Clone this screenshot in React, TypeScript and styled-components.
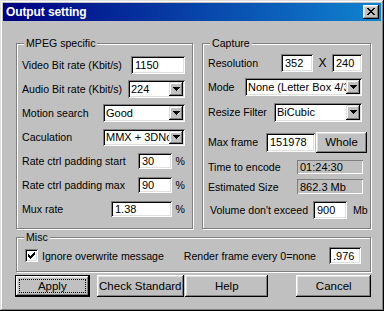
import styled, { createGlobalStyle } from 'styled-components';

const GlobalStyle = createGlobalStyle`
  html, body {
    margin: 0;
    padding: 0;
    background: #c0c0c0;
  }
  body {
    font-family: "Liberation Sans", Arial, sans-serif;
    font-size: 10.6px;
    color: #000;
  }
`;

const Window = styled.div`
  width: 384px;
  height: 311px;
  box-sizing: border-box;
  padding: 3px;
  background: #c0c0c0;
  box-shadow: inset -1px -1px #000, inset 1px 1px #dfdfdf,
    inset -2px -2px #808080, inset 2px 2px #fff;
  display: flex;
  flex-direction: column;
`;

const TitleBar = styled.div`
  height: 18px;
  display: flex;
  align-items: center;
  justify-content: space-between;
  padding: 0 2px 0 3px;
  background: linear-gradient(to right, #000080, #1084d0);
`;

const TitleText = styled.span`
  color: #fff;
  font-weight: bold;
  font-size: 12px;
  letter-spacing: -0.1px;
`;

const CloseButton = styled.div`
  width: 16px;
  height: 14px;
  background: #c0c0c0;
  display: flex;
  align-items: center;
  justify-content: center;
  box-shadow: inset -1px -1px #000, inset 1px 1px #fff,
    inset -2px -2px #808080, inset 2px 2px #dfdfdf;
  svg {
    margin-top: -1px;
  }
`;

const Body = styled.div`
  flex: 1;
  display: flex;
  flex-direction: column;
  padding: 22px 10px 0 13px;
`;

const Columns = styled.div`
  display: grid;
  grid-template-columns: 177px 169px;
  column-gap: 9px;
  height: 186px;
  margin-bottom: 8px;
`;

const Group = styled.div<{ $pad: string; $h?: number }>`
  position: relative;
  box-sizing: border-box;
  border: 1px solid #808080;
  box-shadow: inset 1px 1px #fff, 1px 1px #fff;
  padding: ${(p) => p.$pad};
  ${(p) => (p.$h ? `height: ${p.$h}px;` : '')}
  display: flex;
  flex-direction: column;
`;

const Caption = styled.span`
  position: absolute;
  top: -7px;
  left: 7px;
  padding: 0 2px;
  line-height: 13px;
  background: #c0c0c0;
`;

const Row = styled.div<{ $h?: number }>`
  display: flex;
  align-items: center;
  height: ${(p) => p.$h ?? 24}px;
`;

const Label = styled.span<{ $indent?: number }>`
  flex: 1;
  white-space: nowrap;
  padding-left: ${(p) => p.$indent ?? 0}px;
`;

const sunken = `
  box-sizing: border-box;
  background: #fff;
  box-shadow: inset 1px 1px #808080, inset -1px -1px #fff,
    inset 2px 2px #000, inset -2px -2px #dfdfdf;
`;

const TextBox = styled.div<{ $w: number; $h: number }>`
  ${sunken}
  width: ${(p) => p.$w}px;
  height: ${(p) => p.$h}px;
  padding: 0 3px 0 4px;
  display: flex;
  align-items: center;
  font-size: 11px;
  white-space: nowrap;
  overflow: hidden;
`;

const ComboBox = styled.div<{ $w: number; $h: number }>`
  ${sunken}
  width: ${(p) => p.$w}px;
  height: ${(p) => p.$h}px;
  padding: 2px;
  display: flex;
  align-items: stretch;
  font-size: 11px;
`;

const ComboValue = styled.span`
  flex: 1;
  min-width: 0;
  padding-left: 1px;
  display: flex;
  align-items: center;
  white-space: nowrap;
  overflow: hidden;
`;

const DropButton = styled.span`
  width: 14px;
  flex: none;
  background: #c0c0c0;
  display: flex;
  align-items: center;
  justify-content: center;
  box-shadow: inset -1px -1px #000, inset 1px 1px #dfdfdf,
    inset -2px -2px #808080, inset 2px 2px #fff;
`;

const StaticField = styled.div<{ $w: number; $h: number }>`
  box-sizing: border-box;
  width: ${(p) => p.$w}px;
  height: ${(p) => p.$h}px;
  margin-right: -1px;
  padding-left: 3px;
  display: flex;
  align-items: center;
  font-size: 11px;
  box-shadow: inset 1px 1px #808080, inset -1px -1px #fff;
`;

const Suffix = styled.span<{ $w: number; $pl?: number; $mr?: number }>`
  width: ${(p) => p.$w}px;
  padding-left: ${(p) => p.$pl ?? 0}px;
  margin-right: ${(p) => p.$mr ?? 0}px;
  box-sizing: border-box;
  text-align: ${(p) => (p.$pl ? 'left' : 'right')};
`;

const Times = styled.span`
  width: 19px;
  text-align: center;
  font-size: 12px;
`;

const Button = styled.div<{ $w: number; $h?: number; $ml?: number; $mr?: number; $default?: boolean }>`
  box-sizing: border-box;
  width: ${(p) => p.$w}px;
  height: ${(p) => p.$h ?? 22}px;
  margin-left: ${(p) => p.$ml ?? 0}px;
  margin-right: ${(p) => p.$mr ?? 0}px;
  position: relative;
  display: flex;
  align-items: center;
  justify-content: center;
  font-size: 11.5px;
  background: #c0c0c0;
  border: ${(p) => (p.$default ? '1px solid #000' : 'none')};
  box-shadow: inset -1px -1px #000, inset 1px 1px #fff,
    inset -2px -2px #808080, inset 2px 2px #dfdfdf;
`;

const FocusRing = styled.span`
  position: absolute;
  inset: 3px;
  border: 1px dotted #000;
`;

const MiscRow = styled.div`
  display: flex;
  align-items: center;
  height: 17px;
`;

const CheckBox = styled.span`
  ${sunken}
  width: 13px;
  height: 13px;
  display: flex;
  align-items: center;
  justify-content: center;
  margin-right: 4px;
`;

const RenderLabel = styled.span`
  margin-left: auto;
  margin-right: 13px;
  white-space: nowrap;
`;

const ButtonRow = styled.div`
  display: flex;
  margin-top: 3px;
`;

const Arrow = () => (
  <svg width="7" height="4" viewBox="0 0 7 4">
    <path d="M0 0h7v1H0zM1 1h5v1H1zM2 2h3v1H2zM3 3h1v1H3z" fill="#000" />
  </svg>
);

const Combo = ({ w, h, value }: { w: number; h: number; value: string }) => (
  <ComboBox $w={w} $h={h}>
    <ComboValue>{value}</ComboValue>
    <DropButton>
      <Arrow />
    </DropButton>
  </ComboBox>
);

export default function App() {
  return (
    <>
      <GlobalStyle />
      <Window>
        <TitleBar>
          <TitleText>Output setting</TitleText>
          <CloseButton>
            <svg width="8" height="7" viewBox="0 0 8 7">
              <path
                d="M0 0h2v1H0zM6 0h2v1H6zM1 1h2v1H1zM5 1h2v1H5zM2 2h4v1H2zM3 3h2v1H3zM2 4h4v1H2zM1 5h2v1H1zM5 5h2v1H5zM0 6h2v1H0zM6 6h2v1H6z"
                fill="#000"
              />
            </svg>
          </CloseButton>
        </TitleBar>
        <Body>
          <Columns>
            <Group $pad="9px 7px 0 5px">
              <Caption>MPEG specific</Caption>
              <Row>
                <Label>Video Bit rate (Kbit/s)</Label>
                <TextBox $w={54} $h={18}>1150</TextBox>
              </Row>
              <Row>
                <Label>Audio Bit rate (Kbit/s)</Label>
                <Combo w={57} h={18} value="224" />
              </Row>
              <Row>
                <Label>Motion search</Label>
                <Combo w={82} h={18} value="Good" />
              </Row>
              <Row>
                <Label>Caculation</Label>
                <Combo w={82} h={17} value="MMX + 3DNow!" />
              </Row>
              <Row>
                <Label>Rate ctrl padding start</Label>
                <TextBox $w={34} $h={16}>30</TextBox>
                <Suffix $w={13}>%</Suffix>
              </Row>
              <Row>
                <Label>Rate ctrl padding max</Label>
                <TextBox $w={34} $h={16}>90</TextBox>
                <Suffix $w={13}>%</Suffix>
              </Row>
              <Row>
                <Label>Mux rate</Label>
                <TextBox $w={61} $h={16}>1.38</TextBox>
                <Suffix $w={13}>%</Suffix>
              </Row>
            </Group>
            <Group $pad="7px 8px 0 5px">
              <Caption>Capture</Caption>
              <Row>
                <Label>Resolution</Label>
                <TextBox $w={32} $h={18}>352</TextBox>
                <Times>X</Times>
                <TextBox $w={30} $h={18}>240</TextBox>
              </Row>
              <Row>
                <Label>Mode</Label>
                <Combo w={117} h={18} value="None (Letter Box 4/3)" />
              </Row>
              <Row $h={26}>
                <Label>Resize Filter</Label>
                <Combo w={88} h={19} value="BiCubic" />
              </Row>
              <Row $h={34}>
                <Label>Max frame</Label>
                <TextBox $w={49} $h={19}>151978</TextBox>
                <Button $w={51} $h={21} $ml={1} $mr={-5}>
                  Whole
                </Button>
              </Row>
              <Row $h={16}>
                <Label>Time to encode</Label>
                <StaticField $w={66} $h={14}>01:24:30</StaticField>
              </Row>
              <Row $h={23}>
                <Label>Estimated Size</Label>
                <StaticField $w={66} $h={15}>862.3 Mb</StaticField>
              </Row>
              <Row>
                <Label $indent={2}>Volume don't exceed</Label>
                <TextBox $w={34} $h={18}>900</TextBox>
                <Suffix $w={20} $pl={6} $mr={-5}>
                  Mb
                </Suffix>
              </Row>
            </Group>
          </Columns>
          <Group $pad="9px 9px 7px 8px" $h={35}>
            <Caption>Misc</Caption>
            <MiscRow>
              <CheckBox>
                <svg width="7" height="7" viewBox="0 0 7 7">
                  <path
                    d="M6 0h1v1H6zM5 1h2v1H5zM0 2h1v1H0zM4 2h3v1H4zM0 3h2v1H0zM3 3h3v1H3zM0 4h5v1H0zM1 5h3v1H1zM2 6h1v1H2z"
                    fill="#000"
                  />
                </svg>
              </CheckBox>
              <span>Ignore overwrite message</span>
              <RenderLabel>Render frame every 0=none</RenderLabel>
              <TextBox $w={32} $h={17}>.976</TextBox>
            </MiscRow>
          </Group>
          <ButtonRow>
            <Button $w={75} $ml={-1} $default>
              <FocusRing />
              Apply
            </Button>
            <Button $w={88} $ml={7}>
              Check Standard
            </Button>
            <Button $w={84} $ml={1}>
              Help
            </Button>
            <Button $w={75} $ml={28}>
              Cancel
            </Button>
          </ButtonRow>
        </Body>
      </Window>
    </>
  );
}
